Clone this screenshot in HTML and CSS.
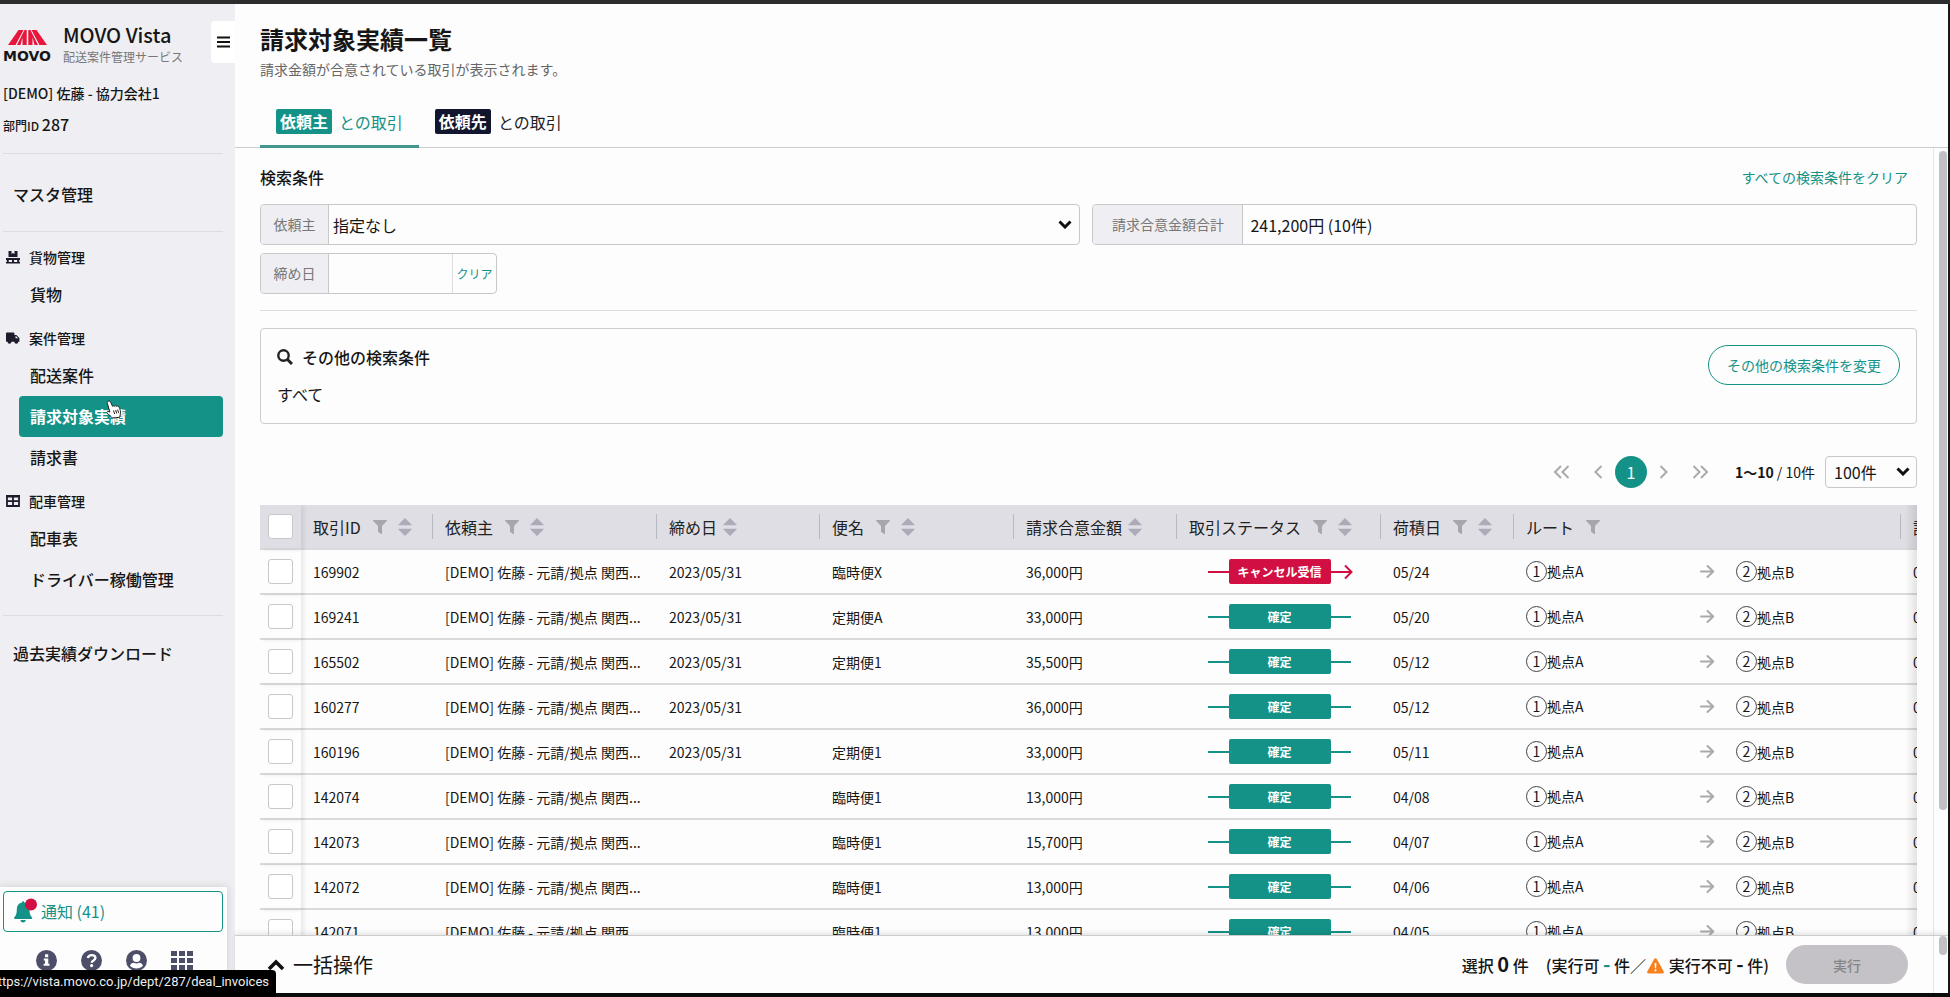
FILE: index.html
```html
<!DOCTYPE html>
<html lang="ja">
<head>
	<meta charset="utf-8">
	<title>請求対象実績一覧 | MOVO Vista</title>
	<meta name="viewport" content="width=device-width">
	<link rel="stylesheet" href="styles.css">
</head>
<body>
	<!-- shared icons -->
	<svg class="defs" aria-hidden="true">
		<symbol id="filter" viewBox="0 0 14 14"><path d="M.6 0h12.800c.6 0 .8.7.4 1.100L9 6v7.400c0 .5-.5.7-.9.5L5.400 12c-.2-.2-.4-.4-.4-.7V6L.2 1.100C-.2.7 0 0 .6 0z" fill="#a6a6ad"/></symbol>
		<symbol id="sort" viewBox="0 0 14 18"><path d="M7 0l6.500 6.400c.3.400.1.800-.3.800H.8c-.4 0-.6-.4-.3-.8zM7 18l6.500-6.400c.3-.4.1-.8-.3-.8H.8c-.4 0-.6.4-.3.800z" fill="#acacb8"/></symbol>
		<symbol id="arrow" viewBox="0 0 15 15"><path d="M1 7.500h12M7.500 2l5.700 5.500L7.500 13" fill="none" stroke="#aaa" stroke-width="2" stroke-linecap="round" stroke-linejoin="round"/></symbol>
		<symbol id="chevron" viewBox="0 0 14 9"><path d="M1.500 1.500L7 7l5.500-5.500" fill="none" stroke="#111" stroke-width="3"/></symbol>
	</svg>
	<div class="topbar"></div>
	<div class="app">
		<nav class="sidebar">
			<div class="brand">
				<div class="logo">
					<svg width="40" height="17" viewBox="0 0 40 17" fill="#e8163c"><path d="M10.500 1h5L7.500 16H0zM16.500 1h2.200v15h-4.200V8.500L12.500 16H9zM28.500 1h-5l8 15H39zM22.500 1h-2.200v15h4.200V8.500L26.500 16H30z"/></svg>
					<span class="logo-text">MOVO</span>
				</div>
				<div class="brand-text">
					<div class="brand-name">MOVO Vista</div>
					<div class="brand-sub">配送案件管理サービス</div>
				</div>
				<button class="menu-toggle" aria-label="メニュー">
					<svg width="13" height="12" viewBox="0 0 13 12"><path d="M0 1.500h13M0 6h13M0 10.500h13" stroke="#111" stroke-width="2"/></svg>
				</button>
			</div>
			<div class="account">[DEMO] 佐藤 - 協力会社1</div>
			<div class="dept">部門ID <span class="dept-id">287</span></div>
			<hr>
			<a class="top-link master" href="#">マスタ管理</a>
			<hr>
			<div class="group">
				<div class="group-head">
					<svg width="14" height="14" viewBox="0 0 14 14" fill="#1c1c2c"><path d="M2.500 1h3v3L7 3l1.500 1V1h3v6h-9zM0 8h14v2H0zM0 12h14v1.500H0zM.8 10h2v2h-2zM6 10h2v2H6zM11.200 10h2v2h-2z"/></svg>
					貨物管理
				</div>
				<a class="item" href="#">貨物</a>
			</div>
			<div class="group">
				<div class="group-head">
					<svg width="14" height="14" viewBox="0 0 14 14" fill="#1c1c2c"><path d="M0 2.500C0 2 .4 1.600.9 1.600h6.600c.5 0 .9.4.9.900V4h2l3 3v3.800h-1.100a2 2 0 0 1-4 0H5.500a2 2 0 0 1-4 0H.9c-.5 0-.9-.4-.9-.9zM9.500 5.200v2h2.700l-2-2z"/></svg>
					案件管理
				</div>
				<a class="item" href="#">配送案件</a>
				<a class="item active" href="#">請求対象実績
					<svg class="cursor" width="18" height="19" viewBox="0 0 18 19"><path d="M3.200 1.300c1-.6 1.900-.1 2.400.9l2 4.100c.4-.6 1.500-.7 2-.1.600-.6 1.700-.5 2.200.2.800-.6 1.900-.2 2.300.7.900 2.200 1.900 4.300 1.200 7l-.5 3.200-7.600.7c-1.100-2-3.300-3-5.100-4.900-.7-.8-.1-1.900 1-1.700l1.800.7L2.400 3.500c-.3-.9-.1-1.700.8-2.200zM8.500 10.500l1.200 3.500M10.600 10l1.200 3.500M12.600 9.500l1 3.300" fill="#fff" stroke="#222" stroke-width="1"/></svg>
				</a>
				<a class="item" href="#">請求書</a>
			</div>
			<div class="group">
				<div class="group-head">
					<svg width="14" height="14" viewBox="0 0 14 14"><path d="M1 2h12v10H1zM7 2v10M1 7.200h12" fill="none" stroke="#1c1c2c" stroke-width="1.800"/><path d="M0 1h14v2.500H0z" fill="#1c1c2c"/></svg>
					配車管理
				</div>
				<a class="item" href="#">配車表</a>
				<a class="item" href="#">ドライバー稼働管理</a>
			</div>
			<hr class="last">
			<a class="top-link" href="#">過去実績ダウンロード</a>

			<div class="side-foot">
				<button class="notice">
					<svg width="24" height="26" viewBox="0 0 24 26"><path d="M9 4.500c0-.8.5-1.300 1.100-1.300s1.100.5 1.100 1.300c3.500.6 5.300 3.200 5.300 6.700 0 4.500.8 6.300 2.500 8.100.6.700.2 1.700-.7 1.700H2c-.9 0-1.300-1-.7-1.700 1.700-1.800 2.500-3.600 2.500-8.100 0-3.500 1.800-6.100 5.200-6.700zM7.500 22h5.200a2.600 2.400 0 0 1-5.200 0z" fill="#149287"/><circle cx="18" cy="6.500" r="6" fill="#d20f42"/></svg>
					通知 (41)
				</button>
				<div class="side-icons">
					<a href="#" aria-label="情報"><svg width="21" height="21" viewBox="0 0 21 21"><circle cx="10.500" cy="10.500" r="10.500" fill="#4d4f68"/><path d="M9 4.200h3.200v3H9zM7.800 8.500h4.500v5.300h1.200v2H7.600v-2H9v-3.300H7.800z" fill="#fff"/></svg></a>
					<a href="#" aria-label="ヘルプ"><svg width="21" height="21" viewBox="0 0 21 21"><circle cx="10.500" cy="10.500" r="10.500" fill="#4d4f68"/><path d="M6.800 8c.6-2 2-2.900 3.900-2.900 2.100 0 3.700 1.200 3.700 3 0 2.500-3.700 2.300-3.700 4.700" fill="none" stroke="#fff" stroke-width="2.400"/><circle cx="10.600" cy="15.600" r="1.600" fill="#fff"/></svg></a>
					<a href="#" aria-label="アカウント"><svg width="21" height="21" viewBox="0 0 21 21"><circle cx="10.500" cy="10.500" r="10.500" fill="#4d4f68"/><circle cx="10.500" cy="8" r="3.900" fill="#fff"/><path d="M4 15.800c.6-2.100 2-3 3.800-3 1.700.8 3.700.8 5.400 0 1.800 0 3.200.9 3.800 3-3.400 3.700-9.600 3.700-13 0z" fill="#fff"/></svg></a>
					<a href="#" aria-label="アプリ一覧"><svg width="22" height="21" viewBox="0 0 22 21" fill="#4d4f68"><path d="M0 1h6v5H0zM8 1h6v5H8zM16 1h6v5h-6zM0 8h6v5H0zM8 8h6v5H8zM16 8h6v5h-6zM0 15h6v5H0zM8 15h6v5H8zM16 15h6v5h-6z"/></svg></a>
				</div>
			</div>
		</nav>

		<main class="main">
			<header class="page-head">
				<h1>請求対象実績一覧</h1>
				<p class="lead">請求金額が合意されている取引が表示されます。</p>
				<div class="tabs">
					<a class="tab active" href="#"><span class="tag">依頼主</span>との取引</a>
					<a class="tab" href="#"><span class="tag">依頼先</span>との取引</a>
				</div>
			</header>

			<div class="scroll">
				<div class="content">
					<div class="search-head">
						<h2>検索条件</h2>
						<a class="clear-all" href="#">すべての検索条件をクリア</a>
					</div>
					<div class="fields">
						<div class="field">
							<label for="client">依頼主</label>
							<select id="client"><option>指定なし</option></select>
							<svg class="caret" width="14" height="9"><use href="#chevron"/></svg>
						</div>
						<div class="field">
							<label class="wide" for="total">請求合意金額合計</label>
							<input id="total" type="text" value="241,200円 (10件)" readonly>
						</div>
						<div class="field date">
							<label for="closing">締め日</label>
							<input id="closing" type="text">
							<button class="clear">クリア</button>
						</div>
					</div>
					<hr>
					<section class="other">
						<div>
							<h2><svg width="16" height="16" viewBox="0 0 16 16"><circle cx="6.500" cy="6.500" r="5.200" fill="none" stroke="#222" stroke-width="2.400"/><path d="M10.300 10.300l4.700 4.700" stroke="#222" stroke-width="3"/></svg>その他の検索条件</h2>
							<p>すべて</p>
						</div>
						<button class="change">その他の検索条件を変更</button>
					</section>

					<div class="pager">
						<button class="nav" aria-label="最初"><svg width="17" height="14" viewBox="0 0 17 14"><path d="M8 1L2 7l6 6M15.500 1l-6 6 6 6"/></svg></button>
						<button class="nav" aria-label="前"><svg width="9" height="14" viewBox="0 0 9 14"><path d="M7.500 1l-6 6 6 6"/></svg></button>
						<button class="page">1</button>
						<button class="nav" aria-label="次"><svg width="9" height="14" viewBox="0 0 9 14"><path d="M1.500 1l6 6-6 6"/></svg></button>
						<button class="nav" aria-label="最後"><svg width="17" height="14" viewBox="0 0 17 14"><path d="M1.500 1l6 6-6 6M9 1l6 6-6 6"/></svg></button>
						<span class="range"><b>1〜10</b> / 10件</span>
						<div class="per-page">
							<select aria-label="表示件数"><option>100件</option></select>
							<svg class="caret" width="14" height="9"><use href="#chevron"/></svg>
						</div>
					</div>

					<div class="table-wrap">
						<table>
							<colgroup><col class="c-check"><col class="c-id"><col class="c-client"><col class="c-close"><col class="c-name"><col class="c-amount"><col class="c-status"><col class="c-load"><col class="c-route"><col class="c-next"></colgroup>
							<thead>
								<tr>
									<th class="check"><input type="checkbox" aria-label="すべて選択"></th>
									<th><div class="th">取引ID<svg class="f"><use href="#filter"/></svg><svg class="s"><use href="#sort"/></svg></div></th>
									<th><div class="th">依頼主<svg class="f"><use href="#filter"/></svg><svg class="s"><use href="#sort"/></svg></div></th>
									<th><div class="th">締め日<svg class="s near"><use href="#sort"/></svg></div></th>
									<th><div class="th">便名<svg class="f"><use href="#filter"/></svg><svg class="s"><use href="#sort"/></svg></div></th>
									<th><div class="th">請求合意金額<svg class="s near"><use href="#sort"/></svg></div></th>
									<th><div class="th">取引ステータス<svg class="f"><use href="#filter"/></svg><svg class="s"><use href="#sort"/></svg></div></th>
									<th><div class="th">荷積日<svg class="f"><use href="#filter"/></svg><svg class="s"><use href="#sort"/></svg></div></th>
									<th><div class="th">ルート<svg class="f"><use href="#filter"/></svg></div></th>
									<th><div class="th">計</div></th>
								</tr>
							</thead>
							<tbody>
								<tr>
									<td class="check"><input type="checkbox" aria-label="169902"></td>
									<td>169902</td><td>[DEMO] 佐藤 - 元請/拠点 関西...</td><td>2023/05/31</td><td>臨時便X</td><td>36,000円</td>
									<td><div class="status cancel"><span>キャンセル受信</span><svg class="head" width="9" height="16" viewBox="0 0 9 16"><path d="M1 1.500L7.500 8 1 14.500" fill="none" stroke="#d20f42" stroke-width="2"/></svg></div></td>
									<td>05/24</td>
									<td><div class="route"><div class="stop"><i>1</i>拠点A</div><svg class="arrow"><use href="#arrow"/></svg><i>2</i>拠点B</div></td><td>0</td>
								</tr>
								<tr>
									<td class="check"><input type="checkbox" aria-label="169241"></td>
									<td>169241</td><td>[DEMO] 佐藤 - 元請/拠点 関西...</td><td>2023/05/31</td><td>定期便A</td><td>33,000円</td>
									<td><div class="status"><span>確定</span></div></td>
									<td>05/20</td>
									<td><div class="route"><div class="stop"><i>1</i>拠点A</div><svg class="arrow"><use href="#arrow"/></svg><i>2</i>拠点B</div></td><td>0</td>
								</tr>
								<tr>
									<td class="check"><input type="checkbox" aria-label="165502"></td>
									<td>165502</td><td>[DEMO] 佐藤 - 元請/拠点 関西...</td><td>2023/05/31</td><td>定期便1</td><td>35,500円</td>
									<td><div class="status"><span>確定</span></div></td>
									<td>05/12</td>
									<td><div class="route"><div class="stop"><i>1</i>拠点A</div><svg class="arrow"><use href="#arrow"/></svg><i>2</i>拠点B</div></td><td>0</td>
								</tr>
								<tr>
									<td class="check"><input type="checkbox" aria-label="160277"></td>
									<td>160277</td><td>[DEMO] 佐藤 - 元請/拠点 関西...</td><td>2023/05/31</td><td></td><td>36,000円</td>
									<td><div class="status"><span>確定</span></div></td>
									<td>05/12</td>
									<td><div class="route"><div class="stop"><i>1</i>拠点A</div><svg class="arrow"><use href="#arrow"/></svg><i>2</i>拠点B</div></td><td>0</td>
								</tr>
								<tr>
									<td class="check"><input type="checkbox" aria-label="160196"></td>
									<td>160196</td><td>[DEMO] 佐藤 - 元請/拠点 関西...</td><td>2023/05/31</td><td>定期便1</td><td>33,000円</td>
									<td><div class="status"><span>確定</span></div></td>
									<td>05/11</td>
									<td><div class="route"><div class="stop"><i>1</i>拠点A</div><svg class="arrow"><use href="#arrow"/></svg><i>2</i>拠点B</div></td><td>0</td>
								</tr>
								<tr>
									<td class="check"><input type="checkbox" aria-label="142074"></td>
									<td>142074</td><td>[DEMO] 佐藤 - 元請/拠点 関西...</td><td></td><td>臨時便1</td><td>13,000円</td>
									<td><div class="status"><span>確定</span></div></td>
									<td>04/08</td>
									<td><div class="route"><div class="stop"><i>1</i>拠点A</div><svg class="arrow"><use href="#arrow"/></svg><i>2</i>拠点B</div></td><td>0</td>
								</tr>
								<tr>
									<td class="check"><input type="checkbox" aria-label="142073"></td>
									<td>142073</td><td>[DEMO] 佐藤 - 元請/拠点 関西...</td><td></td><td>臨時便1</td><td>15,700円</td>
									<td><div class="status"><span>確定</span></div></td>
									<td>04/07</td>
									<td><div class="route"><div class="stop"><i>1</i>拠点A</div><svg class="arrow"><use href="#arrow"/></svg><i>2</i>拠点B</div></td><td>0</td>
								</tr>
								<tr>
									<td class="check"><input type="checkbox" aria-label="142072"></td>
									<td>142072</td><td>[DEMO] 佐藤 - 元請/拠点 関西...</td><td></td><td>臨時便1</td><td>13,000円</td>
									<td><div class="status"><span>確定</span></div></td>
									<td>04/06</td>
									<td><div class="route"><div class="stop"><i>1</i>拠点A</div><svg class="arrow"><use href="#arrow"/></svg><i>2</i>拠点B</div></td><td>0</td>
								</tr>
								<tr>
									<td class="check"><input type="checkbox" aria-label="142071"></td>
									<td>142071</td><td>[DEMO] 佐藤 - 元請/拠点 関西...</td><td></td><td>臨時便1</td><td>13,000円</td>
									<td><div class="status"><span>確定</span></div></td>
									<td>04/05</td>
									<td><div class="route"><div class="stop"><i>1</i>拠点A</div><svg class="arrow"><use href="#arrow"/></svg><i>2</i>拠点B</div></td><td>0</td>
								</tr>
							</tbody>
						</table>
					</div>
				</div>
				<div class="track"><div class="thumb"></div></div>
			</div>

			<footer class="bulk">
				<div class="bulk-body">
					<button class="bulk-toggle"><svg width="18" height="12" viewBox="0 0 18 12"><path d="M2 10l7-7 7 7" fill="none" stroke="#111" stroke-width="3.600"/></svg>一括操作</button>
					<div class="bulk-info">
						<span>選択 <b class="count">0</b> 件</span>
						<span class="result">(実行可 <b class="ok">-</b> 件／<svg class="warn" width="17" height="16" viewBox="0 0 17 16"><path d="M7.300.8c.5-.9 1.900-.9 2.400 0l7 12.800c.5.900-.2 2-1.200 2h-14c-1 0-1.700-1.100-1.200-2z" fill="#f5821f"/><path d="M7.600 5h1.800l-.3 5.300H7.900zM7.600 11.500h1.800v1.800H7.600z" fill="#fff"/></svg> 実行不可 <b>-</b> 件)</span>
						<button class="run" disabled>実行</button>
					</div>
				</div>
				<div class="track"><div class="thumb short"></div></div>
			</footer>
		</main>
	</div>
	<div class="bottombar"></div>
	<div class="url-hint">https://vista.movo.co.jp/dept/287/deal_invoices</div>
</body>
</html>
```
FILE: styles.css
```css
*{box-sizing: border-box;}
html, body{height: 100%;}
body{margin: 0; display: flex; flex-direction: column; overflow: hidden; position: relative; background: #fdfdfd; color: #161616; font-family: "Noto Sans CJK JP", "Noto Sans", sans-serif; font-size: 14px; line-height: 20px;}
h1, h2, p{margin: 0;}
a{color: inherit; text-decoration: none;}
button, input, select{margin: 0; padding: 0; border: 0; background: none; color: inherit; font: inherit; border-radius: 0; appearance: none;}
svg{display: block; flex: none;}
hr{width: 100%; height: 1px; margin: 0; border: 0; background: #dddce0; flex: none;}
.defs{position: absolute; width: 0; height: 0;}
.topbar{height: 4px; background: #2d2d2d; flex: none;}
.bottombar{height: 4px; background: #0c0c0c; flex: none;}
.app{flex: 1; min-height: 0; display: flex; border-right: 2px solid #17171c;}

/* sidebar */
.sidebar{width: 235px; flex: none; display: flex; flex-direction: column; background: #efeef2; padding-top: 17px;}
.sidebar hr{width: 220px; margin-left: 3px;}
.brand{display: flex; height: 42px; padding-left: 3px;}
.logo{width: 60px; padding: 8px 0 0 5px;}
.logo-text{display: block; margin: 3px 0 0 -5px; font: bold 14px/14px "DejaVu Sans", sans-serif;}
.brand-name{font-size: 20px; line-height: 28px; font-weight: 500;}
.brand-sub{font-size: 12px; line-height: 16px; color: #777;}
.menu-toggle{width: 24px; height: 42px; margin-left: auto; padding-left: 6px; background: #fff; border-radius: 4px 0 0 4px;}
.account{margin: 19px 0 0 3px; line-height: 22px; font-weight: 500;}
.dept{margin: 8px 0 15px 3px; font-size: 12px; line-height: 24px; font-weight: 500;}
.dept-id{font-size: 16px;}
.top-link{display: block; margin-top: 17px; padding-left: 13px; font-size: 16px; line-height: 41px; font-weight: 500;}
.master{margin: 20px 0 16px;}
.group{margin-bottom: 7px;}
.group-head{display: flex; align-items: center; gap: 9px; height: 33px; padding: 0 0 2px 6px; font-weight: 500;}
.sidebar hr + .group{margin-top: 9px;}
.sidebar hr.last{margin-top: 8px;}
.item{display: block; position: relative; width: 204px; margin-left: 19px; padding-left: 11px; font-size: 16px; line-height: 41px; font-weight: 500; border-radius: 4px;}
.item.active{background: #149287; color: #fff; font-weight: 700;}
.cursor{position: absolute; left: 86px; top: 4px;}
.side-foot{width: 227px; margin-top: auto; padding: 4px 3px 22px; background: #fdfdfd; box-shadow: 0 0 8px rgba(0, 0, 0, .15);}
.notice{display: flex; align-items: center; gap: 4px; width: 220px; height: 41px; padding: 0 0 2px 9px; border: 1px solid #149287; border-radius: 4px; color: #149287; font-size: 16px;}
.side-icons{display: flex; gap: 24px; margin-top: 18px; padding-left: 33px;}
.url-hint{position: absolute; left: 0; bottom: 0; height: 27px; padding-right: 7px; background: #000; color: #eee; border-radius: 0 4px 0 0; font: 13px/23px Roboto, sans-serif; width: 276px; display: flex; justify-content: flex-end; overflow: hidden; white-space: nowrap;}

/* page header */
.main{flex: 1; min-width: 0; display: flex; flex-direction: column;}
.page-head{padding: 17px 25px 0; border-bottom: 1px solid #ccc; flex: none;}
h1{font-size: 24px; line-height: 36px; font-weight: 700;}
.lead{margin-top: 2px; color: #666;}
.tabs{display: flex; margin: 19px 0 -1px;}
.tab{display: flex; align-items: center; gap: 7px; height: 50px; padding: 0 16px; font-size: 16px; border-bottom: 3px solid transparent; color: #222;}
.tag{padding: 0 4px; line-height: 25px; border-radius: 2px; background: #12152e; color: #fff; font-weight: 700;}
.tab.active{color: #149287; border-color: #43968c;}
.tab.active .tag{background: #149287;}

/* search */
.scroll{flex: 1; min-height: 0; display: flex;}
.content{flex: 1; min-width: 0; overflow: hidden; padding: 17px 16px 0 25px;}
h2{font-size: 16px; line-height: 24px; font-weight: 500;}
.search-head{display: flex; justify-content: space-between; align-items: center;}
.clear-all{padding-right: 9px; color: #149287;}
.fields{display: grid; grid-template-columns: 200fr 201fr; gap: 8px 12px; margin: 15px 0 16px;}
.field{display: flex; align-items: center; position: relative; height: 41px; border: 1px solid #c8c8c8; border-radius: 4px; overflow: hidden;}
.field label{align-self: stretch; width: 68px; flex: none; text-align: center; line-height: 39px; background: #efeef2; border-right: 1px solid #c8c8c8; color: #777;}
.field label.wide{width: 150px;}
.field select, .field input{flex: 1; min-width: 0; height: 39px; padding: 0 7px; font-size: 16px;}
.field select{padding: 0 4px;}
.caret{position: absolute; right: 7px; top: 50%; margin-top: -5px; pointer-events: none;}
.date{width: 237px;}
.clear{align-self: stretch; width: 44px; border-left: 1px solid #ddd; color: #149287; font-size: 12px;}
.other{display: flex; justify-content: space-between; align-items: flex-start; height: 96px; margin-top: 17px; padding: 16px; border: 1px solid #ccc; border-radius: 4px;}
.other h2{display: flex; align-items: center; gap: 9px;}
.other p{margin-top: 13px; font-size: 16px; line-height: 24px;}
.change{height: 40px; padding: 0 18px; border: 1px solid #149287; border-radius: 20px; color: #149287;}

/* pager */
.pager{display: flex; align-items: center; justify-content: flex-end; height: 32px; margin: 32px 0 17px;}
.nav svg{fill: none; stroke: #aaa; stroke-width: 2;}
.nav{margin-left: 24px;}
.page{width: 32px; height: 32px; margin: 0 -12px 0 12px; border-radius: 50%; background: #149287; color: #fff; font-size: 16px;}
.range{margin: 0 10px 0 26px;}
.per-page{position: relative;}
.per-page select{display: block; width: 92px; height: 32px; padding-left: 8px; border: 1px solid #c8c8c8; border-radius: 4px; font-size: 16px;}

/* table */
.table-wrap{position: relative; overflow: hidden;}
.table-wrap:after{content: ""; position: absolute; top: 0; right: 0; bottom: 0; width: 12px; background: linear-gradient(to right, transparent, rgba(0, 0, 0, .1));}
table{width: 1741px; table-layout: fixed; border-collapse: separate; border-spacing: 0;}
.c-check{width: 41px;}
.c-id{width: 132px;}
.c-client{width: 224px;}
.c-close, .c-amount{width: 163px;}
.c-name{width: 194px;}
.c-status{width: 204px;}
.c-load{width: 133px;}
.c-route{width: 387px;}
.c-next{width: 100px;}
th, td{height: 45px; padding: 0 0 0 12px; text-align: left; font-weight: 400; white-space: nowrap; border-bottom: 2px solid #dadadc;}
th{background: #dfdee4; font-size: 16px; color: #222;}
.th{display: flex; align-items: center; position: relative;}
th + th + th .th:before{content: ""; position: absolute; left: -13px; width: 1px; height: 25px; background: #b9b9c4;}
.f{width: 14px; height: 14px; margin-left: 12px;}
.s{width: 14px; height: 18px; margin-left: 11px;}
.s.near{margin-left: 6px;}
.check{position: relative; padding-left: 8px; box-shadow: 3px 0 4px rgba(0, 0, 0, .08);}
.check input{display: block; width: 25px; height: 25px; border: 1px solid #c8c8c8; border-radius: 3px; background: #fff;}
.status{display: flex; align-items: center; width: 143px; margin-left: 19px; position: relative;}
.status:before, .status:after{content: ""; flex: 1; height: 2px; background: #149287;}
.status span{width: 102px; border-radius: 2px; line-height: 25px; text-align: center; background: #149287; color: #fff; font-size: 12px; font-weight: 700;}
.cancel span, .cancel:before, .cancel:after{background: #d20f42;}
.head{position: absolute; right: -2px;}
.route{display: flex; align-items: center;}
.route i{width: 21px; height: 21px; border: 1px solid #444; border-radius: 50%; line-height: 19px; text-align: center; font-style: normal;}
.stop{display: flex; width: 174px;}
.arrow{width: 15px; height: 15px; margin-right: 21px;}

/* scroll bars */
.track{width: 15px; flex: none; padding: 3px 2px 0 5px; border-left: 1px solid #e6e6e6;}
.thumb{width: 8px; height: 84%; border-radius: 4px; background: #c1c0c2;}
.thumb.short{height: 19px;}

/* bulk bar */
.bulk{display: flex; height: 58px; flex: none; position: relative; background: #fdfdfd; border-top: 1px solid #ccc; box-shadow: 0 -2px 5px rgba(0, 0, 0, .1);}
.bulk .track{padding-top: 0;}
.bulk-body{flex: 1; display: flex; align-items: center; justify-content: space-between; padding: 0 25px 0 32px;}
.bulk-toggle{display: flex; align-items: center; gap: 8px; font-size: 20px;}
.bulk-info{display: flex; align-items: center; gap: 17px; font-size: 16px; font-weight: 500;}
.bulk-info b{font-size: 20px;}
.ok{color: #149287;}
.warn{display: inline-block; margin: 0 1px; vertical-align: -2px;}
.run{width: 122px; height: 39px; border-radius: 20px; background: #c4c2c7; color: #858585; font-size: 14px;}
```
